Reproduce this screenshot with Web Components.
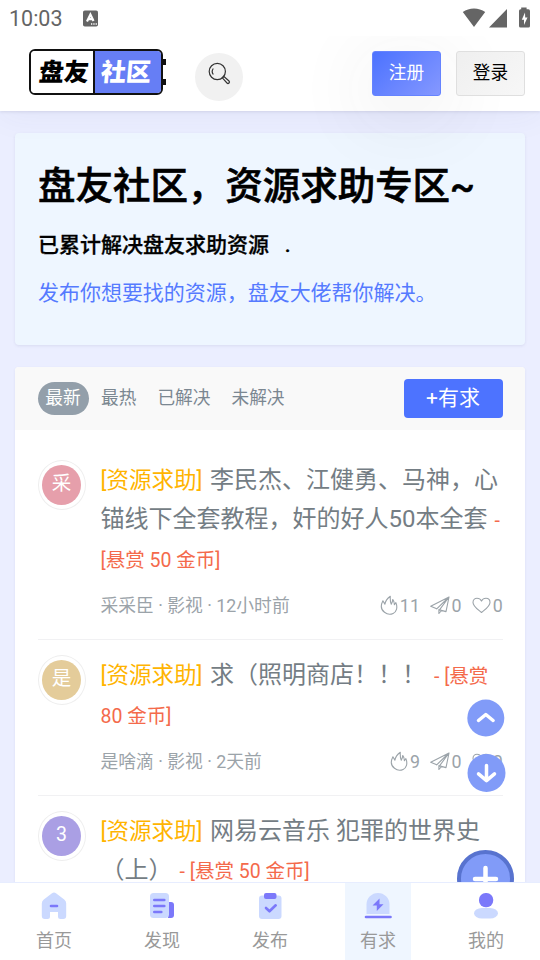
<!DOCTYPE html>
<html lang="zh-CN">
<head>
<meta charset="utf-8">
<meta name="viewport" content="width=device-width">
<title>盘友社区</title>
<style>
html,body{margin:0;height:100%;overflow:hidden}
body{background:#ebeeff;font-family:Roboto,"Noto Sans CJK SC",sans-serif;color:#000}
</style>
</head>
<body>
<pan-app></pan-app>
<script>
function define(name, html, setup) {
  const t = document.createElement('template');
  t.innerHTML = '<style>*{box-sizing:border-box}svg{display:block;flex:none}</style>' + html;
  customElements.define(name, class extends HTMLElement {
    connectedCallback() {
      if (this.shadowRoot) return;
      const r = this.attachShadow({mode: 'open'});
      r.append(t.content.cloneNode(true));
      if (setup) setup(this, r);
    }
  });
}

define('status-bar', `<style>
:host{display:flex;height:36px;background:#fff;align-items:center;padding:0 10px 0 9px;position:relative;z-index:3;color:#656565}
.time{font-size:21.5px;line-height:36px;width:73px;padding-top:2px;white-space:nowrap}
.gap{flex:1}
</style>
<span class="time">10:03</span>
<svg width="16" height="17" viewBox="0 0 16 17"><rect x="1" y="0.500" width="15" height="16" rx="1.8" fill="#656565"/><path d="M5 11.500 8.400 4.500 11.500 11M6 9.200h5" fill="none" stroke="#fff" stroke-width="2.200"/><path d="M9 14h6" stroke="#fff" stroke-width="1.3" stroke-dasharray="1.3 1"/></svg>
<span class="gap"></span>
<svg width="68" height="22" viewBox="462 6.500 68 22" fill="#656565"><path d="M462.800 11.600C469 6.700 479 6.700 485.200 11.600L474 26.400zM507 8.500V27H489zM521.200 7h5.400v1.800h1.800a1.600 1.600 0 0 1 1.600 1.600v15a1.600 1.600 0 0 1-1.600 1.600h-7.800a1.600 1.600 0 0 1-1.600-1.600v-15a1.600 1.600 0 0 1 1.600-1.600h.6z"/><path d="M525 12l-3.200 7.200h2.200V24.500l3.500-7.600h-2.300z" fill="#fff"/></svg>`);

define('site-logo', `<style>
:host{display:flex;width:137px;height:46px;align-items:center;margin-top:1px}
.box{display:flex;width:134px;height:46px;border:2px solid #111;border-radius:6px;overflow:hidden;font-weight:900;font-size:25px;line-height:44px}
.box span{display:flex;justify-content:center;transform:skewX(-5deg)}
.l{width:62px;padding-left:4px;background:#fff;color:#000}
.r{flex:1;border-left:2px solid #111;background:#667ef5;color:#fff;padding-right:4px}
.pins{width:3px;height:26px;border:solid #111;border-width:6px 0}
</style><div class="box"><div class="l"><span>盘友</span></div><div class="r"><span>社区</span></div></div><div class="pins"></div>`);

define('site-header', `<style>
:host{display:flex;height:75px;background:#fff;position:relative;z-index:2;padding:12px 15px 0 29px;box-shadow:0 1px 3px rgba(60,60,100,.13),0 6px 32px rgba(60,60,130,.05)}
.search{width:48px;height:48px;border-radius:50%;background:#f1f1f1;margin:5px 0 0 29px;display:flex;padding:9px 0 0 13px}
.gap{flex:1}
button{font:17.700px/43px Roboto,"Noto Sans CJK SC",sans-serif;height:45px;width:69px;border:1px solid #dfdfdf;border-radius:3px;padding:0;margin-top:3px;background:linear-gradient(135deg,#efefef,#f7f7f7);color:#000}
.primary{background:linear-gradient(135deg,#4c72ff,#8598ff);border-color:#6583ff;color:#fff;margin-right:15px;box-shadow:0 15px 70px 16px rgba(50,50,50,.05)}
.login{position:relative}
</style>
<site-logo></site-logo>
<div class="search"><svg width="23" height="23" viewBox="0 0 23 23" fill="none" stroke="#333" stroke-width="1.2"><circle cx="9.300" cy="9.500" r="8.100"/><path d="M5.300 12.500a5 5 0 0 1 0-6M14.500 15.500l1.200-1.200 5.300 4.700a1.400 1.400 0 0 1-2 2l-4.700-5.200z"/></svg></div>
<span class="gap"></span><button class="primary">注册</button><button class="login">登录</button>`);

define('help-banner', `<style>
:host{display:block;height:212px;margin:22px 15px 0;padding:26px 23px 0;border-radius:4px;background:#eef6ff;box-shadow:0 1px 3px rgba(60,60,120,.1);white-space:nowrap}
h1{font-size:37.5px;line-height:54px;margin:0;font-weight:500;letter-spacing:-.04px;-webkit-text-stroke:.6px #000}
h2{font-size:21px;line-height:32px;font-weight:500;margin:16px 0 0;white-space:pre;-webkit-text-stroke:.3px #000}
p{font-size:21px;line-height:32px;margin:16px 0 0;color:#557aff;letter-spacing:-.03px}
</style><h1>盘友社区，资源求助专区~</h1><h2>已累计解决盘友求助资源   .</h2><p>发布你想要找的资源，盘友大佬帮你解决。</p>`);

define('filter-bar', `<style>
:host{display:flex;height:63px;background:#f9f9f9;padding:12px 22px 0 23px;border-radius:4px 4px 0 0;font-size:17.7px;color:#7b8791}
span{line-height:33px;height:33px;margin:3px 21px 0 0;white-space:nowrap}
.on{background:#939faa;color:#fff;border-radius:17px;width:51px;text-align:center;margin-right:12px;padding-right:1px}
b{flex:1}
button{font:21px/37px Roboto,"Noto Sans CJK SC",sans-serif;background:#4d73ff;color:#fff;border:0;border-radius:4px;width:99px;height:39px;padding:0 1px 0 0}
</style><span class="on">最新</span><span>最热</span><span>已解决</span><span>未解决</span><b></b><button>+有求</button>`);

define('post-title', `<style>
:host{display:flex;align-items:baseline;height:39px;line-height:39px;font-size:24px;color:#747d84;white-space:pre}
</style><slot></slot>`);
define('post-tag', `<style>:host{font-size:22.5px;color:#ffb400;margin-right:7.5px}</style><slot></slot>`);
define('post-reward', `<style>:host{font-size:19.5px;color:#f46a4b}</style><slot></slot>`);

define('post-item', `<style>
:host{display:flex;margin:0 22px 0 23px;padding-top:20px;border-bottom:1px solid #f1f1f3}
.avatar{width:48px;height:50px;margin:0 14.500px 0 0;border:1px solid #eee;border-radius:50%;padding:4px 4px 4px 3px;flex:none}
.avatar i{display:block;height:40px;border-radius:50%;background:var(--tone);color:#fff;text-align:center;font:19.500px/37px Roboto,"Noto Sans CJK SC",sans-serif}
.body{flex:1;min-width:0;padding-top:1px}
.meta{display:flex;align-items:center;height:27px;margin-top:9px;font-size:17.8px;line-height:27px;color:#9ba3a9;white-space:pre}
.gap{flex:1}
svg{fill:none;stroke:#9ba3a9;stroke-width:1.1;stroke-linejoin:round;stroke-linecap:round;margin-top:-2px}
.n{letter-spacing:.3px}
</style>
<div class="avatar"><i></i></div><div class="body"><slot></slot>
<div class="meta"><span class="info"></span><span class="gap"></span>
<svg width="20" height="20" viewBox="0 0 20 20"><path d="M4.500 17.300C.7 14.500.8 9.800 2.900 5.700l2 3.500c.5-3 2.500-5.800 5.400-7.900-.3 3.800.2 6 1 8 .7-1 1.300-2.600 1.400-4.800 1.200 1.200 1.700 3 1.700 5.300l1.500-2.200c2 5 .5 9.300-2.800 10.900-2.800 1.300-6 .9-8.600-1.200"/></svg><span class="hot n"></span><span style="width:10px"></span>
<svg width="21" height="20" viewBox="0.500 0 21 20"><path d="M19.500 2 1.200 11.300l6 2.500zL7.200 13.800M19.500 2l-3 14.600-6.500-1.700zM9.400 14.500v4l2.700-3"/></svg><span class="n">0</span><span style="width:10px"></span>
<svg width="21" height="20" viewBox="0.500 0 21 20"><path d="M10 17.500C6.500 14.500 1.500 11.300 1.500 7.400c0-2.600 1.800-4.100 4-4.100 2 0 3.700 1.200 4.500 2.800.8-1.600 2.500-2.800 4.500-2.800 2.200 0 4 1.500 4 4.100 0 3.900-5 7.100-8.500 10.100z"/></svg><span class="n">0</span></div></div>`,
(el, r) => {
  r.querySelector('i').textContent = el.getAttribute('initial');
  r.querySelector('.info').textContent = el.getAttribute('info');
  r.querySelector('.hot').textContent = el.getAttribute('hot');
  el.style.setProperty('--tone', el.getAttribute('tone'));
});

define('post-list', `<style>
:host{display:block;margin:22px 15px 0;background:#fff;border-radius:4px;box-shadow:0 1px 3px rgba(60,60,120,.08)}
post-item:first-of-type{margin-top:10px}
post-item:not(:first-of-type){padding-top:15px}
.three{height:180px}
.tail{height:44px;line-height:44px}
</style><filter-bar></filter-bar>
<post-item initial="采" tone="#e69fab" info="采采臣 · 影视 · 12小时前" hot="11" style="height:200px">
<post-title><post-tag>[资源求助]</post-tag>李民杰、江健勇、马神，心</post-title>
<post-title>锚线下全套教程，奸的好人50本全套<post-reward style="margin-left:7px">-</post-reward></post-title>
<post-title class="tail"><post-reward>[悬赏 50 金币]</post-reward></post-title></post-item>
<post-item initial="是" tone="#e4cc9a" info="是啥滴 · 影视 · 2天前" hot="9" style="height:156px">
<post-title><post-tag>[资源求助]</post-tag>求（照明商店！！！<post-reward style="margin-left:8px">- [悬赏</post-reward></post-title>
<post-title class="tail"><post-reward>80 金币]</post-reward></post-title></post-item>
<post-item initial="3" tone="#aa9fe4" info="" hot="" class="three">
<post-title><post-tag>[资源求助]</post-tag>网易云音乐 犯罪的世界史</post-title>
<post-title>（上）<post-reward style="margin-left:7px">- [悬赏 50 金币]</post-reward></post-title></post-item>`);

define('float-tools', `<style>
:host{position:absolute;left:456px;top:698px;width:60px;height:184px;overflow:hidden;z-index:4}
</style><svg width="60" height="184" viewBox="456 698 60 184" fill="none" stroke="#fff" stroke-linecap="round" stroke-linejoin="round"><g stroke-width="3.500"><circle cx="485.800" cy="718" r="18.500" fill="#819bf8" stroke="none"/><path d="M478.500 720.500l7.300-6 7.300 6"/><circle cx="486.500" cy="773" r="19" fill="#819bf8" stroke="none"/><path d="M486.500 765.500v14.500M478.500 773.800l8 6.800 8-6.800"/></g><circle cx="485.500" cy="878.500" r="26.500" fill="#819bf8" stroke="#5873cf" stroke-width="4"/><path d="M485.500 868v22M475 879h21" stroke-width="4.500"/></svg>`);

define('nav-item', `<style>
:host{display:flex;flex-direction:column;align-items:center;width:66px;height:77px;padding-top:7px;font-size:18px;line-height:30px;color:#999}
:host([active]){background:#eff6ff}
span{margin-top:4px}
</style><slot name="icon"></slot><span><slot></slot></span>`);

define('bottom-nav', `<style>
:host{display:flex;justify-content:space-between;position:absolute;inset:882px 0 0;background:#fff;border-top:1px solid #e7edff;padding:0 21px;z-index:5}
svg{width:32px;height:32px}
.a{fill:#cbd9ff}.b{fill:#7b78fa}.s{fill:none;stroke:#7b78fa;stroke-width:2.600;stroke-linecap:round;stroke-linejoin:round}
</style>
<nav-item><svg slot="icon" viewBox="0 0 32 32"><path class="a" d="M14 3.200q2-1.400 4 0l8.200 6.300q2 1.500 2 4v12.500q0 3-3 3h-2.700q-2.500 0-2.500-2.500V22h-8v4.500q0 2.500-2.500 2.500H6.800q-3 0-3-3V13.500q0-2.500 2-4z"/><path d="M13 16h6" class="s"/></svg>首页</nav-item>
<nav-item><svg slot="icon" viewBox="0 0 32 32"><path class="b" d="M22 12h3q3 0 3 3v10q0 3-3 3h-3z"/><rect class="a" x="4" y="3" width="19" height="25" rx="3.500"/><path class="s" d="M8.300 10h10M8.300 16h10M8.300 22h7"/></svg>发现</nav-item>
<nav-item><svg slot="icon" viewBox="0 0 32 32"><rect class="a" x="5" y="5.500" width="22.500" height="23.500" rx="3"/><rect class="b" x="10" y="3" width="12.500" height="6" rx="2"/><path class="s" d="M12 18l3.500 3.300 6.200-6"/></svg>发布</nav-item>
<nav-item active><svg slot="icon" viewBox="0 0 32 32"><path class="a" d="M4.500 24V14.500a11.500 11.500 0 0 1 23 0V24z"/><path class="b" d="M17.500 8.500v5.700h4L14.800 21v-5.500h-4.300z"/><path class="s" d="M4 27h24.500"/></svg>有求</nav-item>
<nav-item><svg slot="icon" viewBox="0 0 32 32"><rect class="b" x="9" y="3" width="14.200" height="14.200" rx="6.600"/><rect class="a" x="4" y="18" width="24" height="10.500" rx="8" ry="5.200"/></svg>我的</nav-item>`);

define('pan-app', `<style>:host{display:block;position:relative;width:540px;height:960px;overflow:hidden;background:#ebeeff}</style>
<status-bar></status-bar><site-header></site-header><help-banner></help-banner><post-list></post-list><float-tools></float-tools><bottom-nav></bottom-nav>`);
</script>
</body>
</html>
